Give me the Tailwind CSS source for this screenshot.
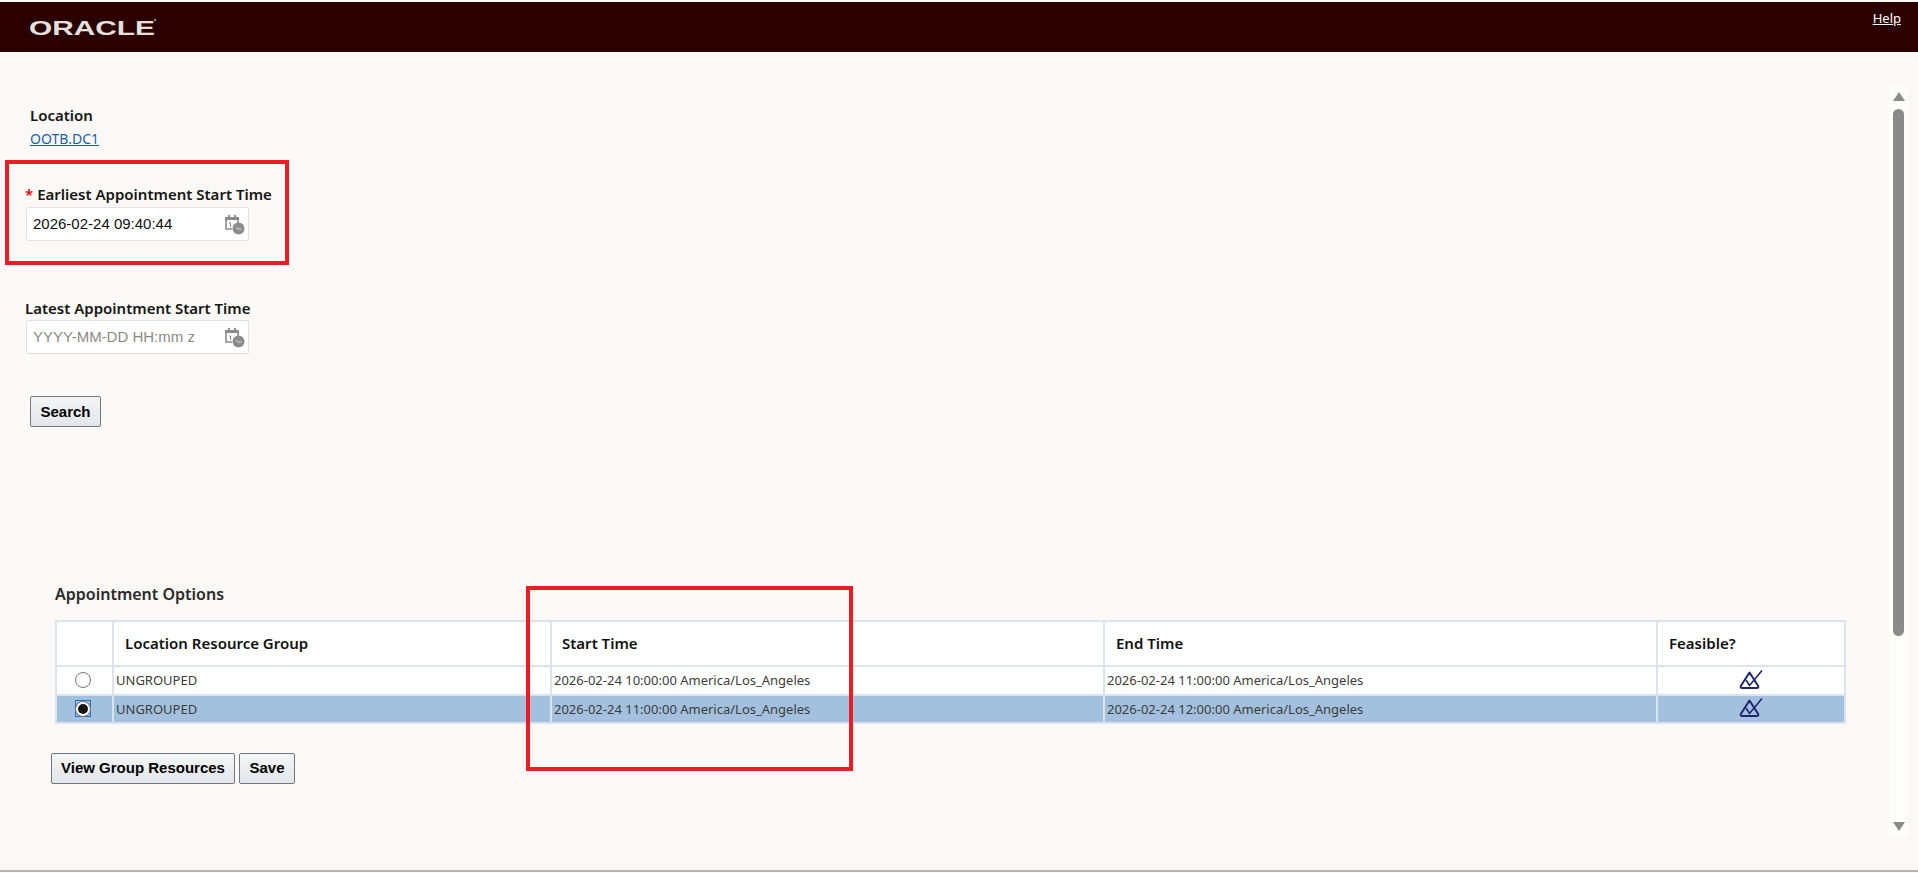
<!DOCTYPE html>
<html lang="en">
<head>
    <meta charset="UTF-8">
    <title>Appointment Options</title>
    <script src="https://cdn.jsdelivr.net/npm/@tailwindcss/browser@4"></script>
</head>
<body class="bg-[#faf9f7] font-['Noto_Sans',sans-serif] text-[#161513]">
<div class="relative h-[873px] w-[1918px] overflow-hidden flex flex-col">
    <!-- Header -->
    <header class="mt-[2px] h-[50px] shrink-0 bg-[#2a0000] flex justify-between">
        <div class="ml-[29px] mt-[16px] w-[126px] h-[20px] relative">
            <span class="absolute left-0 top-0 origin-left scale-x-[1.42] font-['Liberation_Sans',sans-serif] font-bold text-[21px] leading-[20px] text-[#e4e0de] whitespace-nowrap">ORACLE</span>
            <span class="absolute left-[125px] top-[1px] w-[2px] h-[2px] rounded-full bg-[#bbb]"></span>
        </div>
        <a href="#" class="mt-[6px] mr-[17px] text-[13px] leading-[20px] text-white underline h-fit">Help</a>
    </header>

    <div class="flex-1 flex min-h-0">
        <main class="flex-1 min-w-0">
            <!-- Location -->
            <div class="ml-[30px] mt-[52px]">
                <div class="text-[15px] leading-[22px] font-semibold">Location</div>
                <a href="#" class="block text-[14px] leading-[22px] text-[#1a5fa8] underline mt-[2px] w-fit">OOTB.DC1</a>
            </div>

            <!-- Earliest -->
            <div class="ml-[25px] mt-[33px]">
                <div class="text-[15px] leading-[22px] font-semibold whitespace-nowrap"><span class="text-[#e60000] mr-[4px]">*</span>Earliest Appointment Start Time</div>
                <div class="ml-px mt-[2px] w-[223px] h-[34px] bg-white border border-[#dfe1e3] rounded-[2px] flex items-center justify-between pl-[6px] pr-[3px]">
                    <span class="font-['Liberation_Sans',sans-serif] text-[15px] text-[#111]">2026-02-24 09:40:44</span>
                    <svg width="21" height="21" viewBox="0 0 21 21" fill="none">
                        <path d="M2 4h12v9M2 4v11h6" stroke="#8c8c8c" stroke-width="1.6"/>
                        <rect x="1" y="3" width="14" height="3" fill="#8c8c8c"/>
                        <rect x="4" y="1" width="2" height="3" fill="#8c8c8c"/>
                        <rect x="10" y="1" width="2" height="3" fill="#8c8c8c"/>
                        <path d="M5 9h1.5v4" stroke="#8c8c8c" stroke-width="1"/>
                        <circle cx="14.5" cy="14.5" r="6" fill="#8c8c8c"/>
                        <path d="M12 13.5l2.5 1.5h3" stroke="#ddd" stroke-width="1"/>
                    </svg>
                </div>
            </div>

            <!-- Latest -->
            <div class="ml-[25px] mt-[56px]">
                <div class="text-[15px] leading-[22px] font-semibold whitespace-nowrap">Latest Appointment Start Time</div>
                <div class="ml-px mt-px w-[223px] h-[34px] bg-white border border-[#dfe1e3] rounded-[2px] flex items-center justify-between pl-[6px] pr-[3px]">
                    <span class="font-['Liberation_Sans',sans-serif] text-[15px] text-[#8b8b85]">YYYY-MM-DD HH:mm z</span>
                    <svg width="21" height="21" viewBox="0 0 21 21" fill="none">
                        <path d="M2 4h12v9M2 4v11h6" stroke="#8c8c8c" stroke-width="1.6"/>
                        <rect x="1" y="3" width="14" height="3" fill="#8c8c8c"/>
                        <rect x="4" y="1" width="2" height="3" fill="#8c8c8c"/>
                        <rect x="10" y="1" width="2" height="3" fill="#8c8c8c"/>
                        <path d="M5 9h1.5v4" stroke="#8c8c8c" stroke-width="1"/>
                        <circle cx="14.5" cy="14.5" r="6" fill="#8c8c8c"/>
                        <path d="M12 13.5l2.5 1.5h3" stroke="#ddd" stroke-width="1"/>
                    </svg>
                </div>
            </div>

            <button class="ml-[30px] mt-[42px] block w-[71px] h-[31px] pt-px border border-[#75777a] rounded-[2px] bg-gradient-to-b from-[#f4f5f6] to-[#e2e6ea] font-['Liberation_Sans',sans-serif] font-bold text-[15px] text-black">Search</button>

            <!-- Appointment Options -->
            <div class="ml-[55px] mt-[155px] text-[16px] leading-[24px] font-semibold text-[#2b2a28]">Appointment Options</div>

            <table class="ml-[55px] mt-[14px] w-[1791px] table-fixed border-collapse text-[13px] text-[#3d3c3a]">
                <colgroup>
                    <col class="w-[57px]"><col class="w-[438px]"><col class="w-[553px]"><col class="w-[553px]"><col>
                </colgroup>
                <thead>
                    <tr class="h-[45px] bg-white">
                        <th class="border-2 border-[#dce3ea]"></th>
                        <th class="border-2 border-[#dce3ea] pl-[11px] text-left text-[15px] font-semibold text-[#111]">Location Resource Group</th>
                        <th class="border-2 border-[#dce3ea] pl-[10px] text-left text-[15px] font-semibold text-[#111]">Start Time</th>
                        <th class="border-2 border-[#dce3ea] pl-[11px] text-left text-[15px] font-semibold text-[#111]">End Time</th>
                        <th class="border-2 border-[#dce3ea] pl-[11px] text-left text-[15px] font-semibold text-[#111]">Feasible?</th>
                    </tr>
                </thead>
                <tbody>
                    <tr class="h-[29px] bg-white">
                        <td class="border-2 border-[#dce3ea]">
                            <div class="ml-[18px] -mt-px w-[16px] h-[16px] rounded-full border border-[#767676] bg-white"></div>
                        </td>
                        <td class="border-2 border-[#dce3ea] pl-[2px]">UNGROUPED</td>
                        <td class="border-2 border-[#dce3ea] pl-[2px]">2026-02-24 10:00:00 America/Los_Angeles</td>
                        <td class="border-2 border-[#dce3ea] pl-[2px]">2026-02-24 11:00:00 America/Los_Angeles</td>
                        <td class="border-2 border-[#dce3ea]">
                            <svg class="mx-auto -mt-[2px]" width="24" height="20" viewBox="0 0 24 20" fill="none" stroke="#1f2470">
                                <path d="M10.5 2.5L1.8 16q-.6 2 1.4 2h14.6q2 0 1.4-2z" stroke-width="2" stroke-linejoin="round"/>
                                <path d="M7 10l3.5 5.5L23 .5" stroke-width="1.6"/>
                            </svg>
                        </td>
                    </tr>
                    <tr class="h-[28px] bg-[#a3c1df]">
                        <td class="border-2 border-[#dce3ea]">
                            <div class="ml-[18px] -mt-px w-[16px] h-[17px] border border-[#1f6fc4] flex items-center justify-center">
                                <div class="w-[14px] h-[14px] rounded-full border-2 border-white bg-[#161513] ring-1 ring-[#767676]"></div>
                            </div>
                        </td>
                        <td class="border-2 border-[#dce3ea] pl-[2px] pt-[2px]">UNGROUPED</td>
                        <td class="border-2 border-[#dce3ea] pl-[2px] pt-[2px]">2026-02-24 11:00:00 America/Los_Angeles</td>
                        <td class="border-2 border-[#dce3ea] pl-[2px] pt-[2px]">2026-02-24 12:00:00 America/Los_Angeles</td>
                        <td class="border-2 border-[#dce3ea]">
                            <svg class="mx-auto -mt-[2px]" width="24" height="20" viewBox="0 0 24 20" fill="none" stroke="#1f2470">
                                <path d="M10.5 2.5L1.8 16q-.6 2 1.4 2h14.6q2 0 1.4-2z" stroke-width="2" stroke-linejoin="round"/>
                                <path d="M7 10l3.5 5.5L23 .5" stroke-width="1.6"/>
                            </svg>
                        </td>
                    </tr>
                </tbody>
            </table>

            <div class="ml-[51px] mt-[29px] flex gap-[4px]">
                <button class="w-[184px] h-[31px] border border-[#75777a] rounded-[2px] bg-gradient-to-b from-[#f4f5f6] to-[#e2e6ea] font-['Liberation_Sans',sans-serif] font-bold text-[15px] text-black">View Group Resources</button>
                <button class="w-[56px] h-[31px] border border-[#75777a] rounded-[2px] bg-gradient-to-b from-[#f4f5f6] to-[#e2e6ea] font-['Liberation_Sans',sans-serif] font-bold text-[15px] text-black">Save</button>
            </div>
        </main>

        <!-- Scrollbar -->
        <div class="mt-[34px] mb-[34px] mr-[10px] w-[19px] shrink-0 bg-[#fdfdfc] flex flex-col items-center">
            <div class="mt-[6px] w-0 h-0 border-x-[6px] border-x-transparent border-b-[9px] border-b-[#8a8a8a]"></div>
            <div class="mt-[8px] w-[11px] h-[527px] rounded-[6px] bg-[#8a8a8a]"></div>
            <div class="mt-auto mb-[5px] w-0 h-0 border-x-[6px] border-x-transparent border-t-[9px] border-t-[#8a8a8a]"></div>
        </div>
    </div>

    <div class="h-[2px] mb-px shrink-0 bg-[#b4b4b4]"></div>

    <!-- red annotation boxes -->
    <div class="absolute left-[5px] top-[160px] w-[284px] h-[105px] border-4 border-[#ed1c24]"></div>
    <div class="absolute left-[526px] top-[586px] w-[327px] h-[185px] border-4 border-[#ed1c24]"></div>
</div>
</body>
</html>
